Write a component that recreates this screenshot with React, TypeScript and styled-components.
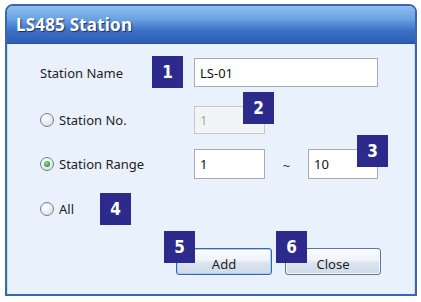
import styled, { createGlobalStyle } from "styled-components";

const GlobalStyle = createGlobalStyle`
  html, body {
    margin: 0;
    padding: 0;
    background: #ffffff;
  }
  body {
    font-family: "Noto Sans", "Liberation Sans", sans-serif;
  }
`;

const Dialog = styled.div`
  margin: 4px 0 0 5px;
  width: 412px;
  height: 292px;
  box-sizing: border-box;
  border: 2px solid #3b66b1;
  border-radius: 8px 8px 0 0;
  overflow: hidden;
  display: flex;
  flex-direction: column;
  background: #e9f1fc;
`;

const TitleBar = styled.div`
  height: 37px;
  flex: none;
  display: flex;
  align-items: center;
  padding-left: 9px;
  background: linear-gradient(
    #8fbdee 0%,
    #6aa2e2 35%,
    #3d72c8 65%,
    #2c5cb4 100%
  );
  border-bottom: 1px solid #2a539e;

  h1 {
    margin: 0;
    color: #fff;
    font-size: 17px;
    font-weight: bold;
    letter-spacing: 0.2px;
    text-shadow: 1px 1px 1px #17305f;
  }
`;

const Body = styled.div`
  flex: 1;
  display: flex;
  flex-direction: column;
  padding: 14px 0 0 33px;
  box-shadow: inset 1px 0 0 #c9dcf4, inset -1px 0 0 #c9dcf4;
`;

const Row = styled.div<{ $gap?: number; $height?: number }>`
  position: relative;
  display: flex;
  align-items: center;
  height: ${(p) => p.$height ?? 29}px;
  margin-top: ${(p) => p.$gap ?? 0}px;
`;

const Label = styled.label`
  width: 154px;
  flex: none;
  display: flex;
  align-items: center;
  gap: 5px;
  font-size: 13px;
  color: #1e1e1e;
`;

const Radio = styled.span<{ $checked?: boolean }>`
  width: 14px;
  height: 14px;
  box-sizing: border-box;
  border-radius: 50%;
  border: 1px solid #6f7f98;
  background: radial-gradient(circle at 40% 35%, #ffffff 0%, #e6e8ec 60%, #c9ced6 100%);
  display: flex;
  align-items: center;
  justify-content: center;

  &::after {
    content: "";
    display: ${(p) => (p.$checked ? "block" : "none")};
    width: 6px;
    height: 6px;
    border-radius: 50%;
    background: radial-gradient(circle at 40% 35%, #8be08b 0%, #2f9e35 70%, #1f7a25 100%);
  }
`;

const Input = styled.div<{ $width: number; $disabled?: boolean }>`
  width: ${(p) => p.$width}px;
  height: 100%;
  box-sizing: border-box;
  border: 1px solid ${(p) => (p.$disabled ? "#c5c8cc" : "#a9abb0")};
  background: ${(p) => (p.$disabled ? "#f3f4f5" : "#ffffff")};
  color: ${(p) => (p.$disabled ? "#a9a9a9" : "#111")};
  font-size: 13px;
  display: flex;
  align-items: center;
  padding-left: 5px;
`;

const Tilde = styled.span`
  width: 43px;
  text-align: center;
  font-size: 13px;
  color: #333;
  padding-top: 4px;
`;

const Badge = styled.span<{ $left: number; $top: number }>`
  position: absolute;
  left: ${(p) => p.$left}px;
  top: ${(p) => p.$top}px;
  width: 31px;
  height: 32px;
  background: #2c2b8c;
  color: #fff;
  font-family: "DejaVu Sans Condensed", "Liberation Sans Narrow", "Liberation Sans", sans-serif;
  font-stretch: condensed;
  font-weight: bold;
  font-size: 17px;
  display: flex;
  align-items: center;
  justify-content: center;
  z-index: 2;
`;

const ButtonBar = styled.div`
  position: relative;
  display: flex;
  justify-content: flex-end;
  gap: 13px;
  margin-top: 25px;
  padding-right: 34px;
`;

const Button = styled.button<{ $default?: boolean }>`
  width: 96px;
  height: 27px;
  border-radius: 3px;
  border: 1px solid ${(p) => (p.$default ? "#3467ad" : "#5d7798")};
  background: linear-gradient(#fbfdff 0%, #eef3fa 45%, #dbe4f0 55%, #cfd9e8 100%);
  box-shadow: ${(p) => (p.$default ? "inset 0 0 0 1px #a8cdf0" : "inset 0 0 0 1px #f4f7fb")};
  font-family: "Noto Sans", "Liberation Sans", sans-serif;
  font-size: 13px;
  color: #1e1e1e;
  padding: 4px 0 0;
`;

export default function App() {
  return (
    <>
      <GlobalStyle />
      <Dialog>
        <TitleBar>
          <h1>LS485 Station</h1>
        </TitleBar>
        <Body>
          <Row>
            <Label>Station Name</Label>
            <Input $width={184}>LS-01</Input>
            <Badge $left={112} $top={-2}>1</Badge>
          </Row>
          <Row $gap={19} $height={28}>
            <Label>
              <Radio />
              Station No.
            </Label>
            <Input $width={71} $disabled>1</Input>
            <Badge $left={203} $top={-14}>2</Badge>
          </Row>
          <Row $gap={15} $height={30}>
            <Label>
              <Radio $checked />
              Station Range
            </Label>
            <Input $width={71}>1</Input>
            <Tilde>~</Tilde>
            <Input $width={70}>10</Input>
            <Badge $left={317} $top={-14}>3</Badge>
          </Row>
          <Row $gap={15}>
            <Label>
              <Radio />
              All
            </Label>
            <Badge $left={60} $top={-1}>4</Badge>
          </Row>
          <ButtonBar>
            <Badge $left={124} $top={-17}>5</Badge>
            <Button $default>Add</Button>
            <Badge $left={236} $top={-17}>6</Badge>
            <Button>Close</Button>
          </ButtonBar>
        </Body>
      </Dialog>
    </>
  );
}
